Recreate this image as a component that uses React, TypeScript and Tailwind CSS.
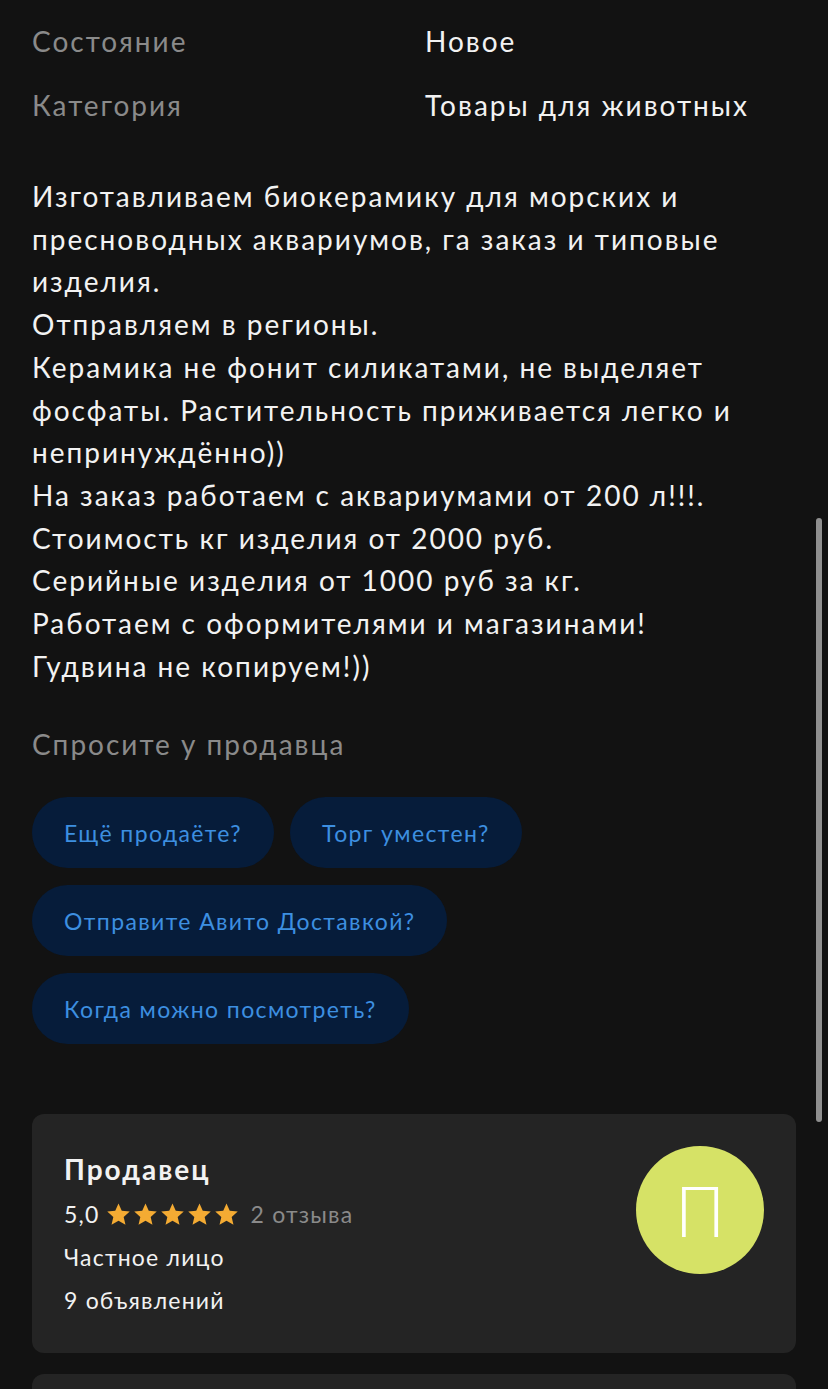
const description = [
  "Изготавливаем биокерамику для морских и пресноводных аквариумов, га заказ и типовые изделия.",
  "Отправляем в регионы.",
  "Керамика не фонит силикатами, не выделяет фосфаты. Растительность приживается легко и непринуждённо))",
  "На заказ работаем с аквариумами от 200 л!!!.",
  "Стоимость кг изделия от 2000 руб.",
  "Серийные изделия от 1000 руб за кг.",
  "Работаем с оформителями и магазинами!",
  "Гудвина не копируем!))",
];

const questions = [
  ["Ещё продаёте?", "Торг уместен?"],
  ["Отправите Авито Доставкой?"],
  ["Когда можно посмотреть?"],
];

function Star() {
  return (
    <svg viewBox="0 0 24 24" className="w-[27px] h-[27px]" fill="#f4ab33">
      <path d="M12 2.2l2.9 6.5 7.1.7-5.4 4.8 1.6 7-6.2-3.7-6.2 3.7 1.6-7L2 9.4l7.1-.7z" />
    </svg>
  );
}

export default function App() {
  return (
    <div
      className="relative min-h-[1389px] bg-[#121212] text-[#f2f2f2] overflow-hidden"
      style={{ fontFamily: "Lato, 'Noto Sans', sans-serif" }}
    >
      <div className="px-[32px] pt-[20px]">
        {/* Params */}
        <div className="flex flex-col gap-[22px] text-[28px] leading-[42px] tracking-[2px]">
          <div className="flex">
            <div className="w-[393px] text-[#8a8a8a]">Состояние</div>
            <div>Новое</div>
          </div>
          <div className="flex">
            <div className="w-[393px] text-[#8a8a8a]">Категория</div>
            <div>Товары для животных</div>
          </div>
        </div>

        {/* Description */}
        <div className="mt-[49px] text-[28px] leading-[42.7px] tracking-[2px]">
          {description.map((p) => (
            <p key={p}>{p}</p>
          ))}
        </div>

        {/* Ask seller */}
        <div className="mt-[37px] text-[28px] leading-[40px] tracking-[2px] text-[#8a8a8a]">
          Спросите у продавца
        </div>

        <div className="mt-[33px] flex flex-col gap-[17px]">
          {questions.map((row, i) => (
            <div key={i} className="flex gap-[16px]">
              {row.map((q) => (
                <div
                  key={q}
                  className="h-[71px] px-[32px] rounded-full bg-[#061c3a] text-[#3d8fe0] text-[23px] tracking-[1.4px] flex items-center"
                >
                  {q}
                </div>
              ))}
            </div>
          ))}
        </div>

        {/* Seller card */}
        <div className="mt-[70px] rounded-[12px] bg-[#242424] h-[239px] px-[32px] pt-[38px] flex justify-between">
          <div>
            <div className="text-[28px] leading-[34px] font-bold tracking-[2px]">Продавец</div>
            <div className="mt-[13px] flex items-center text-[23px] leading-[30px] tracking-[1.2px]">
              <span>5,0</span>
              <span className="flex ml-[5px] mr-[11px]">
                <Star />
                <Star />
                <Star />
                <Star />
                <Star />
              </span>
              <span className="text-[#8a8a8a]">2 отзыва</span>
            </div>
            <div className="mt-[13px] text-[23px] leading-[30px] tracking-[1.2px]">Частное лицо</div>
            <div className="mt-[13px] text-[23px] leading-[30px] tracking-[1.2px]">9 объявлений</div>
          </div>
          <div className="mt-[-6px] w-[128px] h-[128px] rounded-full bg-[#d6e266] flex items-center justify-center text-white text-[70px] leading-none font-light">
            П
          </div>
        </div>

        <div className="mt-[21px] rounded-t-[12px] bg-[#242424] h-[60px]" />
      </div>

      {/* Scrollbar */}
      <div className="absolute left-[816px] top-[518px] w-[6px] h-[604px] rounded-full bg-[#8f8f8f]" />
    </div>
  );
}
